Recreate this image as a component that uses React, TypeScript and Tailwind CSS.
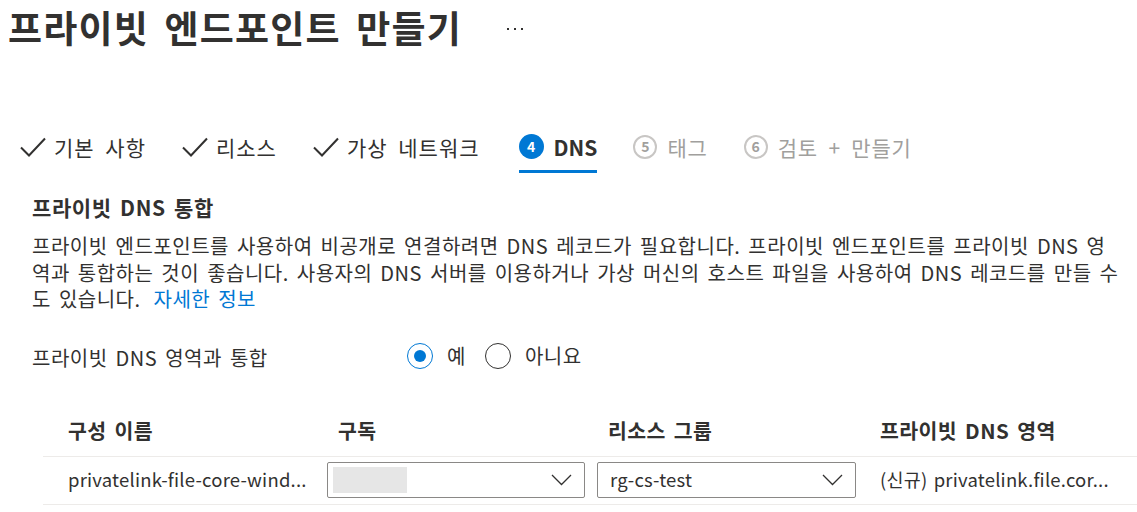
const font = { fontFamily: '"Noto Sans CJK KR", "Noto Sans", sans-serif' };

interface StepProps {
  label: string;
  state: "done" | "active" | "todo";
  num?: number;
}

const CheckMark = () => (
  <svg width="26" height="20" viewBox="0 0 26 20" fill="none">
    <path d="M1 10.5 L9 18.5 L25 1.5" stroke="#323130" strokeWidth="2" />
  </svg>
);

const Step = ({ label, state, num }: StepProps) => {
  if (state === "done") {
    return (
      <div className="flex items-center gap-[8px] h-[50px] pb-[3px]">
        <CheckMark />
        <span className="text-[21px] leading-[28px] tracking-[1px] [word-spacing:5px] text-[#323130]">{label}</span>
      </div>
    );
  }
  if (state === "active") {
    return (
      <div className="ml-[3px] flex items-center gap-[10px] h-[50px] border-b-[3px] border-[#0078d4]">
        <span className="w-[25px] h-[25px] rounded-full bg-[#0078d4] text-white text-[14px] font-bold flex items-center justify-center">
          {num}
        </span>
        <span className="text-[21px] leading-[28px] font-semibold text-[#323130]">{label}</span>
      </div>
    );
  }
  return (
    <div className="flex items-center gap-[10px] h-[50px] pb-[3px]">
      <span className="w-[24px] h-[24px] rounded-full border-2 border-[#c8c6c4] text-[#a19f9d] text-[14px] font-semibold flex items-center justify-center">
        {num}
      </span>
      <span className="text-[21px] leading-[28px] tracking-[0.8px] [word-spacing:5px] text-[#a19f9d]">{label}</span>
    </div>
  );
};

const Chevron = () => (
  <svg width="21" height="12" viewBox="0 0 21 12" fill="none" className="ml-auto">
    <path d="M1 1 L10.5 10.5 L20 1" stroke="#323130" strokeWidth="1.3" />
  </svg>
);

const Dropdown = ({ value, width }: { value?: string; width: string }) => (
  <div className={`${width} h-[36px] border border-[#8a8886] rounded-[2px] flex items-center pl-[5px] pr-[12px]`}>
    {value ? (
      <span className="pl-[7px] text-[18.5px] tracking-[0.2px] text-[#323130]">{value}</span>
    ) : (
      <div className="w-[74px] h-[26px] bg-[#e6e6e6]" />
    )}
    <Chevron />
  </div>
);

const body = "text-[20px] tracking-[0.5px] [word-spacing:3px]";

export default function App() {
  return (
    <div style={font} className="w-[1137px] h-[512px] overflow-hidden bg-white text-[#323130]">
      <div className="flex items-center pl-[8px] h-[54px]">
        <h1 className="text-[37px] leading-[44px] font-semibold tracking-[1.2px] [word-spacing:6px]">
          프라이빗 엔드포인트 만들기
        </h1>
        <div className="ml-[45px] flex gap-[5px] pt-[3px]">
          <span className="w-[2px] h-[2px] bg-[#323130]" />
          <span className="w-[2px] h-[2px] bg-[#323130]" />
          <span className="w-[2px] h-[2px] bg-[#323130]" />
        </div>
      </div>

      <div className="flex gap-[36px] pl-[20px] mt-[69px]">
        <Step state="done" label="기본 사항" />
        <Step state="done" label="리소스" />
        <Step state="done" label="가상 네트워크" />
        <Step state="active" num={4} label="DNS" />
        <Step state="todo" num={5} label="태그" />
        <Step state="todo" num={6} label="검토 + 만들기" />
      </div>

      <div className="pl-[32px]">
        <h2 className="mt-[21px] text-[21px] leading-[26px] font-semibold tracking-[0.6px] [word-spacing:3px]">
          프라이빗 DNS 통합
        </h2>
        <p className={`mt-[13px] leading-[26.5px] whitespace-nowrap ${body}`}>
          <span className="block">
            프라이빗 엔드포인트를 사용하여 비공개로 연결하려면 DNS 레코드가 필요합니다. 프라이빗 엔드포인트를 프라이빗 DNS 영
          </span>
          <span className="block">
            역과 통합하는 것이 좋습니다. 사용자의 DNS 서버를 이용하거나 가상 머신의 호스트 파일을 사용하여 DNS 레코드를 만들 수
          </span>
          <span className="block">
            도 있습니다. <a className="ml-[5px] text-[#0078d4]">자세한 정보</a>
          </span>
        </p>

        <div className="flex items-center mt-[28px] h-[30px]">
          <span className={`w-[375px] pt-[5px] ${body}`}>프라이빗 DNS 영역과 통합</span>
          <label className="flex items-center gap-[14px]">
            <span className="w-[26px] h-[26px] rounded-full border border-[#0078d4] flex items-center justify-center">
              <span className="w-[12px] h-[12px] rounded-full bg-[#0078d4]" />
            </span>
            <span className={body}>예</span>
          </label>
          <label className="flex items-center gap-[14px] ml-[19px]">
            <span className="w-[26px] h-[26px] rounded-full border border-[#323130]" />
            <span className={body}>아니요</span>
          </label>
        </div>
      </div>

      <div className="ml-[43px] mt-[34px]">
        <div className="grid grid-cols-[284px_270px_283px_1fr] h-[52px] items-center border-b border-[#edebe9] text-[20.5px] font-semibold tracking-[0.4px] [word-spacing:3px]">
          <span className="pl-[25px]">구성 이름</span>
          <span className="pl-[11px]">구독</span>
          <span className="pl-[11px]">리소스 그룹</span>
          <span>프라이빗 DNS 영역</span>
        </div>
        <div className="grid grid-cols-[284px_270px_283px_1fr] h-[48px] items-center border-b border-[#edebe9] text-[18.5px] tracking-[0.2px]">
          <span className="pl-[25px]">privatelink-file-core-wind...</span>
          <Dropdown width="w-[258px]" />
          <Dropdown width="w-[259px]" value="rg-cs-test" />
          <span className="[word-spacing:2px]">(신규) privatelink.file.cor...</span>
        </div>
      </div>
    </div>
  );
}
